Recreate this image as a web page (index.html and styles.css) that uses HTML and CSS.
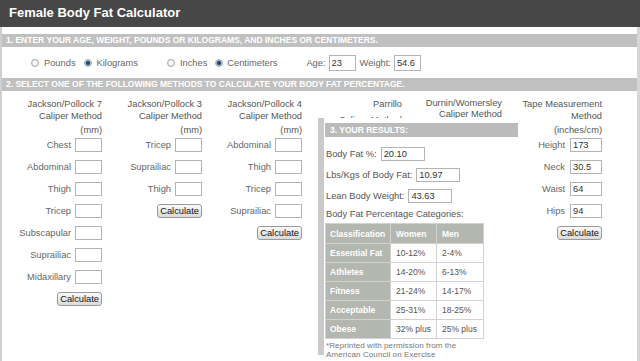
FILE: index.html
```html
<!DOCTYPE html>
<html lang="en">
<head>
  <meta charset="UTF-8" />
  <meta name="viewport" content="width=device-width, initial-scale=1.0"/>
  <title>Female Body Fat Calculator</title>
  <link rel="stylesheet" href="styles.css">
</head>
<body>

  <div class="topbar">
    <h1>Female Body Fat Calculator</h1>
  </div>

  <div class="page">
    <div class="bar">1. ENTER YOUR AGE, WEIGHT, POUNDS OR KILOGRAMS, AND INCHES OR CENTIMETERS.</div>

    <div class="units">
      <label class="opt"><input type="radio" name="weight"> Pounds</label>
      <label class="opt"><input type="radio" name="weight" checked> Kilograms</label>
      <label class="opt group"><input type="radio" name="length"> Inches</label>
      <label class="opt tight"><input type="radio" name="length" checked> Centimeters</label>
      <label class="opt group" for="age">Age:</label>
      <input type="text" id="age" class="box" value="23" />
      <label class="opt" for="weight">Weight:</label>
      <input type="text" id="weight" class="box" value="54.6" />
    </div>

    <div class="bar">2. SELECT ONE OF THE FOLLOWING METHODS TO CALCULATE YOUR BODY FAT PERCENTAGE.</div>

    <div class="methods">

      <div class="col">
        <div class="title">Jackson/Pollock 7<br>Caliper Method</div>
        <div class="unit">(mm)</div>
        <div class="fields">
          <label class="field">Chest <input type="text"></label>
          <label class="field">Abdominal <input type="text"></label>
          <label class="field">Thigh <input type="text"></label>
          <label class="field">Tricep <input type="text"></label>
          <label class="field">Subscapular <input type="text"></label>
          <label class="field">Suprailiac <input type="text"></label>
          <label class="field">Midaxillary <input type="text"></label>
          <div class="field"><button>Calculate</button></div>
        </div>
      </div>

      <div class="col">
        <div class="title">Jackson/Pollock 3<br>Caliper Method</div>
        <div class="unit">(mm)</div>
        <div class="fields">
          <label class="field">Tricep <input type="text"></label>
          <label class="field">Suprailiac <input type="text"></label>
          <label class="field">Thigh <input type="text"></label>
          <div class="field"><button>Calculate</button></div>
        </div>
      </div>

      <div class="col">
        <div class="title">Jackson/Pollock 4<br>Caliper Method</div>
        <div class="unit">(mm)</div>
        <div class="fields">
          <label class="field">Abdominal <input type="text"></label>
          <label class="field">Thigh <input type="text"></label>
          <label class="field">Tricep <input type="text"></label>
          <label class="field">Suprailiac <input type="text"></label>
          <div class="field"><button>Calculate</button></div>
        </div>
      </div>

      <!-- these two sit under the results box, only their titles show -->
      <div class="col">
        <div class="title">Parrillo<span class="low">Caliper Method</span></div>
      </div>

      <div class="col">
        <div class="title tight">Durnin/Womersley<br>Caliper Method</div>
      </div>

      <div class="col tape">
        <div class="title">Tape Measurement<br>Method</div>
        <div class="unit">(inches/cm)</div>
        <div class="fields">
          <label class="field">Height <input type="text" value="173"></label>
          <label class="field">Neck <input type="text" value="30.5"></label>
          <label class="field">Waist <input type="text" value="64"></label>
          <label class="field">Hips <input type="text" value="94"></label>
          <div class="field"><button>Calculate</button></div>
        </div>
      </div>

      <div class="results">
        <div class="bar">3. YOUR RESULTS:</div>
        <label class="res-row first">Body Fat %: <input type="text" value="20.10"></label>
        <label class="res-row">Lbs/Kgs of Body Fat: <input type="text" value="10.97"></label>
        <label class="res-row">Lean Body Weight: <input type="text" value="43.63"></label>
        <div class="cat-title">Body Fat Percentage Categories:</div>
        <table class="cats">
          <tr class="head"><th>Classification</th><th>Women</th><th>Men</th></tr>
          <tr><th>Essential Fat</th><td>10-12%</td><td>2-4%</td></tr>
          <tr><th>Athletes</th><td>14-20%</td><td>6-13%</td></tr>
          <tr><th>Fitness</th><td>21-24%</td><td>14-17%</td></tr>
          <tr><th>Acceptable</th><td>25-31%</td><td>18-25%</td></tr>
          <tr><th>Obese</th><td>32% plus</td><td>25% plus</td></tr>
        </table>
        <p class="note">*Reprinted with permission from the<br>American Council on Exercise</p>
      </div>

    </div>
  </div>

</body>
</html>
```

FILE: styles.css
```css
body {
  margin: 0;
  font-family: "Liberation Sans", Arial, sans-serif;
  font-size: 9.3px;
  color: #666;
  background: #fff;
}
.topbar {
  height: 27px;
  background: #474747;
}
.topbar h1 {
  margin: 0;
  padding-left: 9px;
  font-size: 13px;
  line-height: 25px;
  color: #fff;
}
.page {
  border-left: 2px solid #cfcfcf;
  border-right: 3px solid #d6d6d6;
  padding-top: 7px;
  min-height: calc(100vh - 34px);
}
.bar {
  height: 13px;
  line-height: 13px;
  padding-left: 4px;
  background: #c0c0c0;
  color: #fff;
  font-size: 8.5px;
  font-weight: bold;
  white-space: nowrap;
}
.units {
  display: flex;
  align-items: center;
  height: 31px;
  padding-left: 29px;
}
.opt {
  display: flex;
  align-items: center;
  gap: 5px;
  margin-right: 8px;
}
.opt.tight {
  gap: 4px;
}
.opt.group {
  margin-left: 21px;
}
.opt[for] {
  margin-right: 3px;
}
.units .box {
  width: 27px;
  height: 16px;
  margin-right: 4px;
}
input[type="radio"] {
  appearance: none;
  width: 8px;
  height: 8px;
  margin: 0;
  border: 1px solid #a8a8a8;
  border-radius: 50%;
  background: radial-gradient(circle, #fff 0, #e4e4e4 100%);
}
input[type="radio"]:checked {
  background: radial-gradient(circle, #1e4d78 0, #1e4d78 1.6px, #8fb0cc 2.4px, #ececec 3.4px);
}
input[type="text"] {
  box-sizing: border-box;
  width: 27px;
  height: 14px;
  margin: 0;
  padding: 0 2px;
  border: 1px solid #b4b4b4;
  font-family: inherit;
  font-size: 9.3px;
  color: #333;
  background: #fff;
}
.methods {
  position: relative;
  display: grid;
  grid-template-columns: repeat(6, 100px);
  padding-top: 7px;
}
.col {
  display: flex;
  flex-direction: column;
  align-items: flex-end;
}
.title {
  height: 24px;
  line-height: 12px;
  text-align: right;
  color: #555;
}
.title.tight {
  line-height: 10.5px;
}
.title .low {
  display: block;
  margin-top: 4px;
}
.unit {
  margin-top: 2px;
  line-height: 12px;
  color: #555;
}
.fields {
  display: flex;
  flex-direction: column;
  align-items: flex-end;
  gap: 8px;
  margin-top: 2px;
}
.field {
  display: flex;
  align-items: center;
  justify-content: flex-end;
  gap: 4px;
  height: 14px;
}
.tape .field {
  gap: 5px;
}
.tape input[type="text"] {
  width: 32px;
}
button {
  height: 14px;
  padding: 0 2px;
  border: 1px solid #9a9a9a;
  border-radius: 3px;
  background: linear-gradient(#fafafa, #dadada);
  font-family: inherit;
  font-size: 9.3px;
  line-height: 12px;
  color: #111;
  cursor: pointer;
}
.results {
  position: absolute;
  top: 27px;
  left: 316px;
  box-sizing: border-box;
  width: 200px;
  height: 237px;
  padding-left: 1px;
  border-left: 6px solid #cacaca;
  background: #fff;
  color: #555;
}
.results .bar {
  margin-top: 5px;
  height: 14px;
  line-height: 14px;
  padding-left: 5px;
  background: #bbb;
}
.res-row {
  display: flex;
  align-items: center;
  gap: 4px;
  height: 14px;
  padding-left: 1px;
  margin-top: 7px;
}
.res-row.first {
  margin-top: 10px;
}
.res-row input[type="text"] {
  width: 44px;
}
.cat-title {
  margin-top: 5px;
  padding-left: 1px;
  line-height: 12px;
}
.cats {
  margin-top: 3px;
  width: 159px;
  border-collapse: collapse;
  font-size: 8.5px;
}
.cats tr {
  height: 19px;
}
.cats tr.head {
  height: 20px;
}
.cats th, .cats td {
  padding: 0 0 0 5px;
  border: 1px solid #d2d2d0;
  text-align: left;
}
.cats th {
  background: #b4b6b0;
  color: #fff;
  font-weight: bold;
}
.cats th:first-child {
  width: 60px;
  padding-left: 4px;
}
.cats td {
  color: #555;
}
.cats tr.head th:nth-child(2) {
  width: 40px;
}
.note {
  margin: 2px 0 0;
  padding-left: 1px;
  font-size: 8px;
  line-height: 9px;
  letter-spacing: 0.1px;
  color: #777;
}
```
